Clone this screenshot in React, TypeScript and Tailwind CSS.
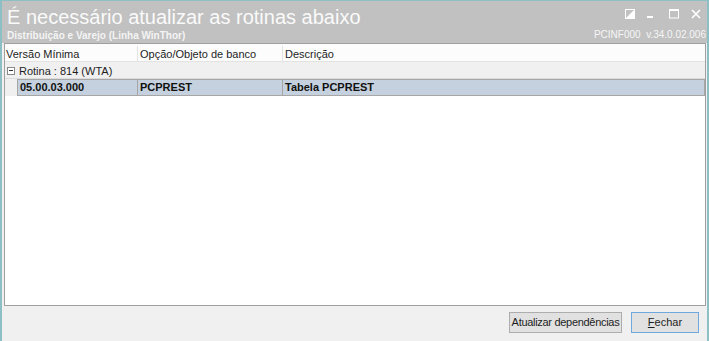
import React from "react";

export default function App() {
  const f = { fontFamily: '"Liberation Sans", Arial, sans-serif' };
  return (
    <div
      className="w-[709px] h-[341px] flex flex-col border-t border-l-2 border-r-2 border-[#8cc0c4] bg-[#f0f0f0] overflow-hidden"
      style={f}
    >
      {/* Title bar */}
      <div className="h-[42px] bg-[#c1c1c1] flex justify-between shrink-0">
        <div className="pl-[5px] pt-[5px] flex flex-col">
          <div className="text-[20px] leading-[23px] text-[#fafafa]">É necessário atualizar as rotinas abaixo</div>
          <div className="text-[10px] leading-[12px] font-bold text-[#f4f4f4] mt-[1px]">Distribuição e Varejo (Linha WinThor)</div>
        </div>
        <div className="flex flex-col items-end pr-[1px]">
          <div className="flex items-start h-[28px] pt-[8px] pr-[5px]">
            <svg width="10" height="10" viewBox="0 0 10 10" className="mr-[12px]">
              <rect x="0.5" y="0.5" width="9" height="9" fill="none" stroke="#ffffff" strokeWidth="1" />
              <polygon points="9,1 9,9 1,9" fill="#ffffff" />
            </svg>
            <svg width="7" height="10" viewBox="0 0 7 10" className="mr-[15px]">
              <rect x="0" y="7" width="6" height="2" fill="#ffffff" />
            </svg>
            <svg width="10" height="10" viewBox="0 0 10 10" className="mr-[12px]">
              <rect x="0.5" y="0.5" width="9" height="8.5" fill="none" stroke="#ffffff" strokeWidth="1" />
              <rect x="0" y="0" width="10" height="2" fill="#ffffff" />
            </svg>
            <svg width="10" height="10" viewBox="0 0 10 10">
              <path d="M1 1 L9 9 M9 1 L1 9" stroke="#ffffff" strokeWidth="1.6" />
            </svg>
          </div>
          <div className="text-[10px] leading-[12px] text-[#f6f6f6] whitespace-pre">PCINF000  v.34.0.02.006</div>
        </div>
      </div>

      {/* Grid */}
      <div className="flex-1 ml-[2px] mr-[1px] border border-[#a0a0a0] bg-white flex flex-col text-[11px] text-[#1e1e1e]">
        <div className="h-[18px] flex bg-[#fcfcfc] border-b border-[#e3e3e3] leading-[17px] pt-[2px] overflow-hidden">
          <div className="w-[133px] pl-[1px] border-r border-[#e3e3e3]">Versão Mínima</div>
          <div className="w-[145px] pl-[2px] border-r border-[#e3e3e3]">Opção/Objeto de banco</div>
          <div className="flex-1 pl-[2px]">Descrição</div>
        </div>
        <div className="h-[17px] flex items-center bg-[#f0f0f0] border-b border-[#dcdcdc] pt-[1px]">
          <div className="ml-[2px] w-[8px] h-[8px] border border-[#8a8a8a] bg-white flex items-center justify-center">
            <div className="w-[4px] h-[1px] bg-[#333]" />
          </div>
          <div className="ml-[4px] leading-[16px]">Rotina : 814 (WTA)</div>
        </div>
        <div className="h-[17px] flex font-bold leading-[15px]">
          <div className="w-[12px] bg-[#f0f0f0]" />
          <div className="flex-1 flex bg-[#c5d1de] border border-[#a6a6a6] text-[#111]">
            <div className="w-[120px] pl-[2px] border-r border-[#a6a6a6]">05.00.03.000</div>
            <div className="w-[145px] pl-[2px] border-r border-[#a6a6a6]">PCPREST</div>
            <div className="flex-1 pl-[2px]">Tabela PCPREST</div>
          </div>
        </div>
      </div>

      {/* Footer */}
      <div className="h-[35px] shrink-0 flex justify-end items-start pt-[6px] pr-[8px] gap-[9px] text-[11px] text-[#1e1e1e]">
        <button className="w-[113px] h-[21px] border border-[#adadad] bg-[#e1e1e1] leading-[19px] tracking-[-0.3px]">
          Atualizar dependências
        </button>
        <button className="w-[68px] h-[21px] border border-[#6fa8dc] bg-[#e1e1e1] leading-[19px]">
          <span className="underline">F</span>echar
        </button>
      </div>
    </div>
  );
}
